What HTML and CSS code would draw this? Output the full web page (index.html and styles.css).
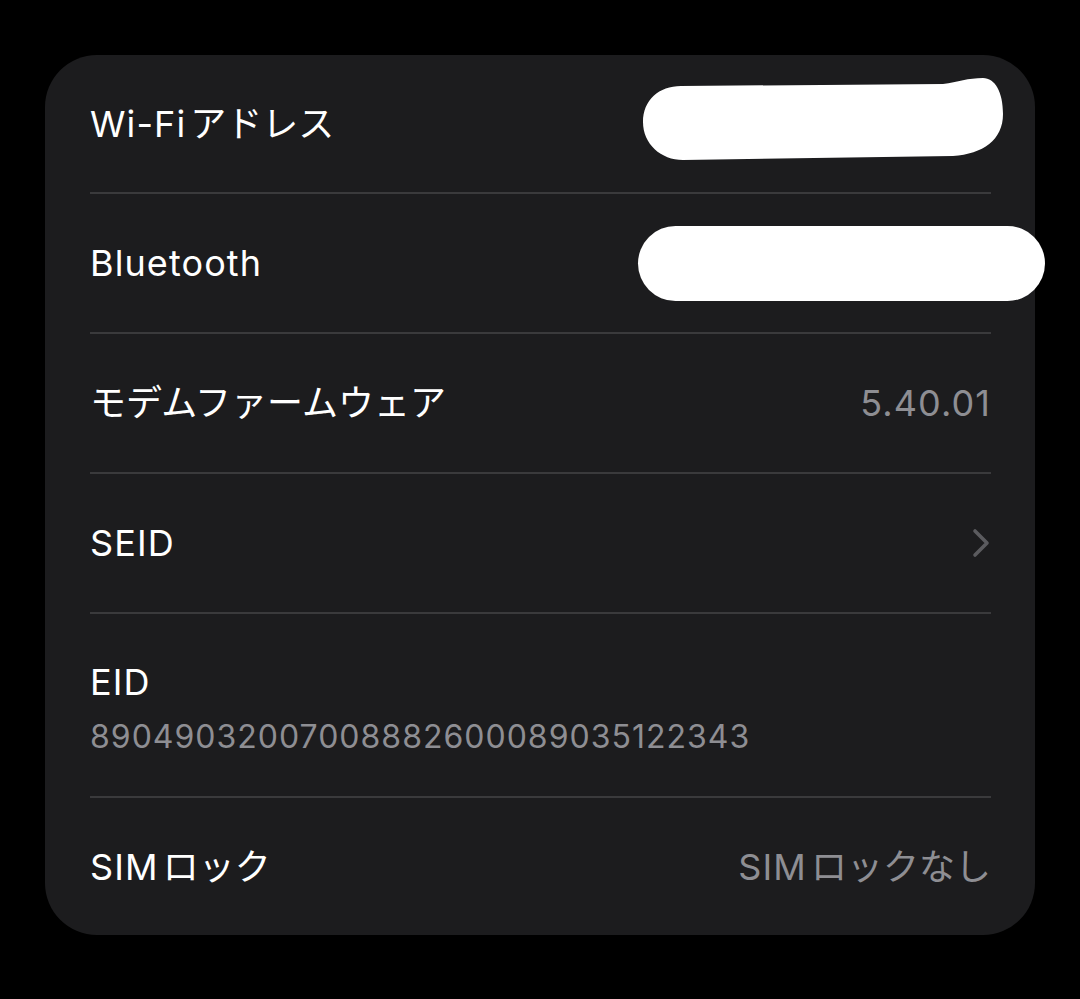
FILE: index.html
```html
<!DOCTYPE html>
<html lang="ja">
<head>
  <meta charset="UTF-8">
  <title>情報</title>
  <link rel="stylesheet" href="styles.css">
</head>
<body>
  <div class="card">
    <div class="row row-first">
      <span class="label"><span class="lt">Wi-Fi</span> アドレス</span>
      <svg class="mark mark-wifi" width="360" height="82" viewBox="0 0 360 82">
        <path d="M38,8 L300,6 C315,4 325,0 340,0 C352,0 360,14 360,36 C360,62 340,76 310,78 L40,82 C18,82 0,66 0,44 C0,22 16,8 38,8 Z" fill="#fff"/>
      </svg>
    </div>

    <div class="row">
      <span class="label lt">Bluetooth</span>
      <div class="mark mark-bt"></div>
    </div>

    <div class="row">
      <span class="label">モデムファームウェア</span>
      <span class="value lt">5.40.01</span>
    </div>

    <div class="row">
      <span class="label lt">SEID</span>
      <svg class="chevron" width="18" height="30" viewBox="0 0 18 30">
        <path d="M3,3 L15,15 L3,27" fill="none" stroke="#5b5b5f" stroke-width="3.6" stroke-linecap="round" stroke-linejoin="round"/>
      </svg>
    </div>

    <div class="row row-stack">
      <span class="label lt">EID</span>
      <span class="sub">89049032007008882600089035122343</span>
    </div>

    <div class="row row-last">
      <span class="label"><span class="lt">SIM</span> ロック</span>
      <span class="value"><span class="lt">SIM</span> ロックなし</span>
    </div>
  </div>
</body>
</html>
```

FILE: styles.css
```css
body {
  margin: 0;
  background: #000;
  font-family: Inter, 'Noto Sans CJK JP', sans-serif;
  color: #fff;
}

.card {
  width: 990px;
  height: 880px;
  margin: 55px 0 0 45px;
  background: #1c1c1e;
  border-radius: 52px;
  display: flex;
  flex-direction: column;
  padding: 0 44px 0 45px;
  box-sizing: border-box;
}

.row {
  position: relative;
  height: 140px;
  flex-shrink: 0;
  box-sizing: border-box;
  display: flex;
  align-items: center;
  justify-content: space-between;
  border-bottom: 2px solid #3a3a3c;
}

.row-first {
  height: 139px;
}

.row-stack {
  height: 184px;
  flex-direction: column;
  align-items: flex-start;
  justify-content: flex-start;
  padding-top: 46px;
}

.row-last {
  border-bottom: none;
  flex: 1;
}

.label {
  font-size: 36px;
  line-height: 44px;
  word-spacing: -6px;
}

.value {
  font-size: 36px;
  line-height: 44px;
  color: #8e8e93;
  word-spacing: -6px;
}

.lt {
  letter-spacing: 1.1px;
}

.sub {
  margin-top: 13px;
  font-size: 32px;
  line-height: 40px;
  color: #8e8e93;
  letter-spacing: 1px;
}

.chevron {
  margin-right: 1px;
}

.mark {
  position: absolute;
}

.mark-wifi {
  left: 553px;
  top: 23px;
}

.mark-bt {
  left: 548px;
  top: 32px;
  width: 407px;
  height: 75px;
  background: #fff;
  border-radius: 38px;
}
```
